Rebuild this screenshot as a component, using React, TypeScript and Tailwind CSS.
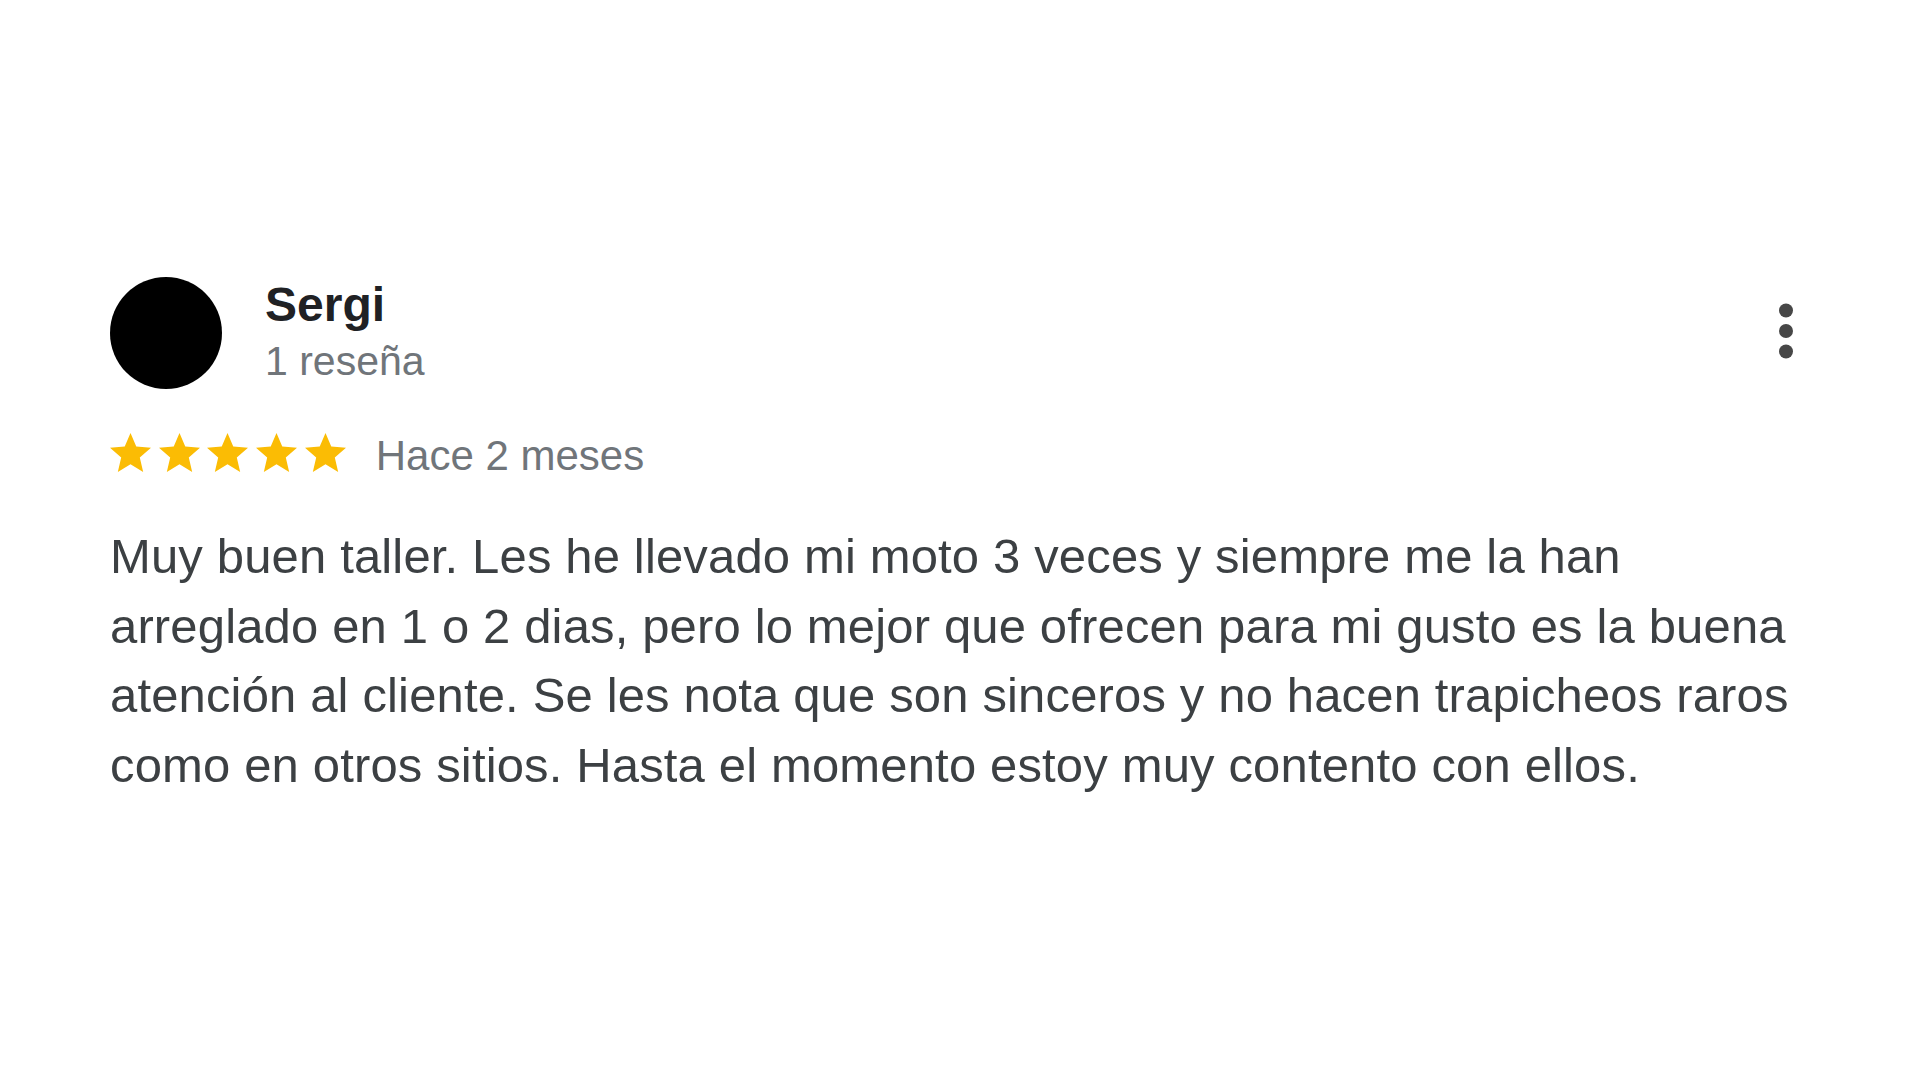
import React from "react";

const review = {
  name: "Sergi",
  count: "1 reseña",
  rating: 5,
  when: "Hace 2 meses",
  text: "Muy buen taller. Les he llevado mi moto 3 veces y siempre me la han arreglado en 1 o 2 dias, pero lo mejor que ofrecen para mi gusto es la buena atención al cliente. Se les nota que son sinceros y no hacen trapicheos raros como en otros sitios. Hasta el momento estoy muy contento con ellos.",
};

function Star() {
  return (
    <svg viewBox="2 2 20 20" className="w-[41px] h-[41px] shrink-0" aria-hidden="true">
      <path
        fill="#fbbc04"
        d="M12 17.27L18.18 21l-1.64-7.03L22 9.24l-7.19-.61L12 2 9.19 8.63 2 9.24l5.46 4.73L5.82 21z"
      />
    </svg>
  );
}

function MoreVert() {
  return (
    <svg viewBox="0 0 48 56" className="w-[48px] h-[56px]" aria-hidden="true">
      <circle cx="24" cy="7.5" r="7" fill="#474747" />
      <circle cx="24" cy="28" r="7" fill="#474747" />
      <circle cx="24" cy="48.5" r="7" fill="#474747" />
    </svg>
  );
}

export default function App() {
  return (
    <div className="w-full min-h-screen bg-white font-['Liberation_Sans',Arial,sans-serif]">
      <div className="px-[110px] pt-[277px]">
        {/* cabecera */}
        <div className="flex items-start justify-between">
          <div className="flex items-start gap-[43px]">
            <div className="w-[112px] h-[112px] rounded-full bg-black shrink-0" />
            <div className="flex flex-col">
              <span className="text-[48px] leading-[56px] font-bold text-[#202124]">{review.name}</span>
              <span className="text-[41px] leading-[56px] text-[#70757a]">{review.count}</span>
            </div>
          </div>
          <button className="mt-[26px]">
            <MoreVert />
          </button>
        </div>

        {/* valoración */}
        <div className="flex items-start mt-[44px]">
          <div className="flex gap-[7.7px]">
            {Array.from({ length: review.rating }).map((_, i) => (
              <Star key={i} />
            ))}
          </div>
          <span className="ml-[30px] text-[42px] leading-[45px] text-[#70757a]">{review.when}</span>
        </div>

        <p className="mt-[44px] text-[49px] leading-[69.5px] tracking-[0.15px] text-[#3c4043]">{review.text}</p>
      </div>
    </div>
  );
}
